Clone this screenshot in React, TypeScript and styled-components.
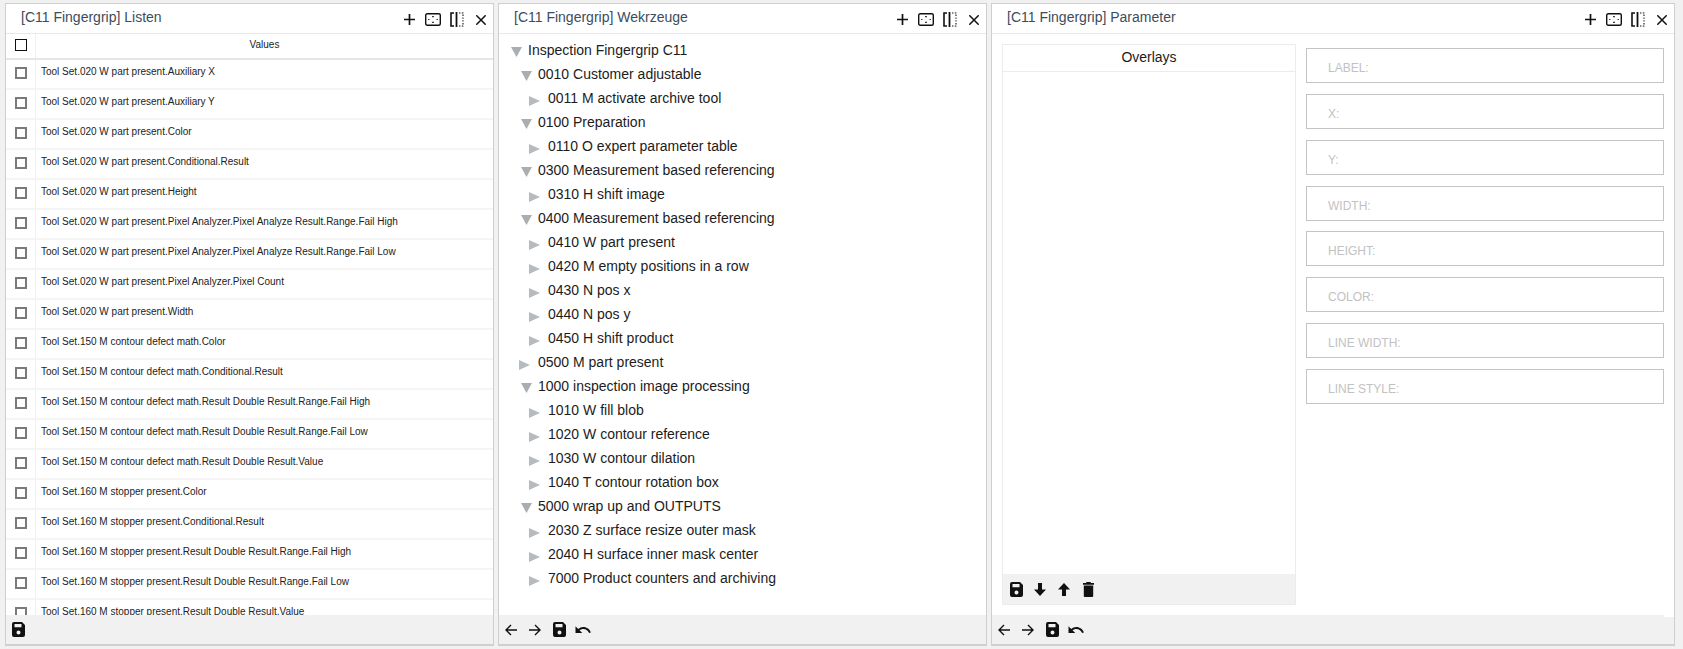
import React from "react";
import styled, { createGlobalStyle } from "styled-components";
import { MdUndo } from "react-icons/md";

const Global = createGlobalStyle`
  html, body { margin: 0; padding: 0; height: 100%; background: #f1f1f1; overflow: hidden; }
  body { font-family: "Liberation Sans", Arial, sans-serif; }
  #root { height: 100%; }
  * { box-sizing: border-box; }
`;

const Page = styled.div`
  display: grid;
  grid-template-columns: 489px 489px 684px;
  gap: 4px;
  height: 649px;
  width: 1683px;
  padding: 3px 0 3px 5px;
`;

const Panel = styled.section`
  display: flex;
  flex-direction: column;
  min-width: 0;
  background: #fff;
  border: 1px solid #cfcfcf;
  border-bottom-width: 2px;
  overflow: hidden;
`;

const Header = styled.header`
  flex: 0 0 30px;
  display: flex;
  align-items: center;
  justify-content: space-between;
  padding: 0 0 0 15px;
  border-bottom: 1px solid #e8e8e8;
`;

const Title = styled.h2`
  margin: -4px 0 0;
  font-size: 14px;
  font-weight: 400;
  color: #3d4c5c;
`;

const HeaderTools = styled.div`
  display: flex;
  align-items: center;
  margin-top: 2px;
`;

const ToolSlot = styled.span`
  width: 24px;
  height: 20px;
  display: flex;
  align-items: center;
  justify-content: center;
  color: #111;
`;

const Footer = styled.footer`
  position: relative;
  flex: 0 0 29px;
  display: flex;
  align-items: center;
  background: #f1f1f1;
  color: #111;
`;

const NotchedFooter = styled(Footer)`
  &::after {
    content: "";
    position: absolute;
    top: 0;
    right: 0;
    width: 10px;
    height: 2px;
    background: #fff;
  }
`;

const FootIcon = styled.span`
  width: 24px;
  height: 20px;
  display: flex;
  align-items: center;
  justify-content: center;
`;

const ListBody = styled.div`
  flex: 1;
  min-height: 0;
  overflow: hidden;
`;

const TableHead = styled.div`
  display: grid;
  grid-template-columns: 30px 1fr;
  height: 26px;
  border-bottom: 2px solid #e6e6e6;
  font-size: 10px;
  color: #222;
`;

const Row = styled.div`
  display: grid;
  grid-template-columns: 30px 1fr;
  height: 30px;
  border-bottom: 2px solid #f5f5f5;
  font-size: 10px;
  color: #222;
`;

const CheckCell = styled.div`
  display: flex;
  align-items: center;
  justify-content: center;
  border-right: 1px solid #f0f0f0;
  padding-bottom: 2px;
`;

const Check = styled.span<{ $dark?: boolean }>`
  display: block;
  width: 12px;
  height: 12px;
  border: ${(p) => (p.$dark ? "1px solid #111" : "2px solid #7a7a7a")};
  background: #fff;
`;

const HeadLabel = styled.div`
  text-align: center;
  line-height: 22px;
`;

const RowLabel = styled.div`
  padding-left: 5px;
  line-height: 24px;
  white-space: nowrap;
`;

const Tree = styled.div`
  flex: 1;
  min-height: 0;
  padding: 4px 0 0 12px;
  overflow: hidden;
`;

const TreeRow = styled.div<{ $level: number }>`
  height: 24px;
  display: flex;
  align-items: center;
  padding-left: ${(p) => p.$level * 10}px;
  font-size: 14px;
  color: #1c1c1c;
  white-space: nowrap;
`;

const Arrow = styled.span<{ $open: boolean }>`
  flex: 0 0 17px;
  display: block;
  height: 10px;
  color: ${(p) => (p.$open ? "#a9aeb2" : "#b6bbbf")};
  margin-left: ${(p) => (p.$open ? "0" : "-2px")};
  margin-right: ${(p) => (p.$open ? "0" : "2px")};
  margin-top: ${(p) => (p.$open ? "-3px" : "0")};
`;

const ParamBody = styled.div`
  flex: 1;
  min-height: 0;
  display: flex;
  gap: 10px;
  padding: 10px 10px 10px 10px;
`;

const Overlays = styled.div`
  flex: 0 0 294px;
  display: flex;
  flex-direction: column;
  border: 1px solid #ececec;
`;

const OverlaysTitle = styled.div`
  height: 27px;
  line-height: 24px;
  text-align: center;
  font-size: 14px;
  color: #1c1c1c;
  border-bottom: 1px solid #ececec;
`;

const OverlaysList = styled.div`
  flex: 1;
`;

const OverlaysFooter = styled.div`
  flex: 0 0 30px;
  display: flex;
  align-items: center;
  padding-left: 1px;
  background: #f1f1f1;
  color: #111;
`;

const Form = styled.div`
  flex: 1;
  display: flex;
  flex-direction: column;
  gap: 10.85px;
  padding-top: 4px;
`;

const Field = styled.div`
  height: 35px;
  display: flex;
  align-items: center;
  padding: 5px 0 0 21px;
  border: 1px solid #c4c4c4;
  font-size: 12px;
  color: #c2c2c2;
  text-transform: uppercase;
`;

const TriangleDown = () => (
  <svg width="11" height="10" viewBox="0 0 11 10"><path d="M0 0h11L5.5 10z" fill="currentColor" /></svg>
);
const TriangleRight = () => (
  <svg width="11" height="10" viewBox="0 0 11 10"><path d="M0 0l11 5-11 5z" fill="currentColor" /></svg>
);

const PlusIcon = () => (
  <svg width="11" height="11" viewBox="0 0 11 11"><path d="M5.5 0v11M0 5.5h11" stroke="currentColor" strokeWidth="1.7" /></svg>
);
const MaxIcon = () => (
  <svg width="16" height="13" viewBox="0 0 16 13" fill="none">
    <rect x=".7" y=".7" width="14.6" height="11.6" rx="1.5" stroke="currentColor" strokeWidth="1.4" />
    <path d="M7.2 3h1.6v1.2H7.2zM7.2 8.8h1.6V10H7.2zM3.2 5.9h1.2v1.2H3.2zM11.6 5.9h1.2v1.2h-1.2z" fill="currentColor" />
  </svg>
);
const SplitIcon = () => (
  <svg width="14" height="15" viewBox="0 0 14 15" fill="none">
    <path d="M4 1H1v13h3" stroke="currentColor" strokeWidth="1.6" />
    <path d="M6.5 0v15" stroke="currentColor" strokeWidth="1.8" />
    <path d="M9 1h4v13H9" stroke="currentColor" strokeWidth="1.1" strokeDasharray="1.4 1.4" />
  </svg>
);
const CloseIcon = () => (
  <svg width="10" height="10" viewBox="0 0 10 10"><path d="M.3.3l9.4 9.4M9.7.3L.3 9.7" stroke="currentColor" strokeWidth="1.5" /></svg>
);
const BackIcon = () => (
  <svg width="12" height="12" viewBox="0 0 12 12" fill="none"><path d="M6 1L1 6l5 5M1 6h11" stroke="currentColor" strokeWidth="1.4" /></svg>
);
const ForwardIcon = () => (
  <svg width="12" height="12" viewBox="0 0 12 12" fill="none"><path d="M6 1l5 5-5 5M11 6H0" stroke="currentColor" strokeWidth="1.4" /></svg>
);
const SaveIcon = () => (
  <svg width="13" height="15" viewBox="0 0 13 15">
    <path fillRule="evenodd" fill="currentColor" d="M2 0h8l3 3v10a2 2 0 0 1-2 2H2a2 2 0 0 1-2-2V2a2 2 0 0 1 2-2zM2.5 2v3.2h7V2zM6.5 8.6a2 2 0 1 0 0 4 2 2 0 0 0 0-4z" />
  </svg>
);
const DownIcon = () => (
  <svg width="12" height="13" viewBox="0 0 12 13"><path fill="currentColor" d="M4 0h4v6.5h4L6 13 0 6.5h4z" /></svg>
);
const UpIcon = () => (
  <svg width="12" height="13" viewBox="0 0 12 13"><path fill="currentColor" d="M6 0l6 6.5H8V13H4V6.5H0z" /></svg>
);
const TrashIcon = () => (
  <svg width="11" height="15" viewBox="0 0 11 15"><path fill="currentColor" d="M3.5 0h4l.5 1h3v1.8H0V1h3zM.8 3.6h9.4V14a1 1 0 0 1-1 1H1.8a1 1 0 0 1-1-1z" /></svg>
);

const listItems = [
  "Tool Set.020 W part present.Auxiliary X",
  "Tool Set.020 W part present.Auxiliary Y",
  "Tool Set.020 W part present.Color",
  "Tool Set.020 W part present.Conditional.Result",
  "Tool Set.020 W part present.Height",
  "Tool Set.020 W part present.Pixel Analyzer.Pixel Analyze Result.Range.Fail High",
  "Tool Set.020 W part present.Pixel Analyzer.Pixel Analyze Result.Range.Fail Low",
  "Tool Set.020 W part present.Pixel Analyzer.Pixel Count",
  "Tool Set.020 W part present.Width",
  "Tool Set.150 M contour defect math.Color",
  "Tool Set.150 M contour defect math.Conditional.Result",
  "Tool Set.150 M contour defect math.Result Double Result.Range.Fail High",
  "Tool Set.150 M contour defect math.Result Double Result.Range.Fail Low",
  "Tool Set.150 M contour defect math.Result Double Result.Value",
  "Tool Set.160 M stopper present.Color",
  "Tool Set.160 M stopper present.Conditional.Result",
  "Tool Set.160 M stopper present.Result Double Result.Range.Fail High",
  "Tool Set.160 M stopper present.Result Double Result.Range.Fail Low",
  "Tool Set.160 M stopper present.Result Double Result.Value",
];

const treeItems: { label: string; level: number; open: boolean }[] = [
  { label: "Inspection Fingergrip C11", level: 0, open: true },
  { label: "0010 Customer adjustable", level: 1, open: true },
  { label: "0011 M activate archive tool", level: 2, open: false },
  { label: "0100 Preparation", level: 1, open: true },
  { label: "0110 O expert parameter table", level: 2, open: false },
  { label: "0300 Measurement based referencing", level: 1, open: true },
  { label: "0310 H shift image", level: 2, open: false },
  { label: "0400 Measurement based referencing", level: 1, open: true },
  { label: "0410 W part present", level: 2, open: false },
  { label: "0420 M empty positions in a row", level: 2, open: false },
  { label: "0430 N pos x", level: 2, open: false },
  { label: "0440 N pos y", level: 2, open: false },
  { label: "0450 H shift product", level: 2, open: false },
  { label: "0500 M part present", level: 1, open: false },
  { label: "1000 inspection image processing", level: 1, open: true },
  { label: "1010 W fill blob", level: 2, open: false },
  { label: "1020 W contour reference", level: 2, open: false },
  { label: "1030 W contour dilation", level: 2, open: false },
  { label: "1040 T contour rotation box", level: 2, open: false },
  { label: "5000 wrap up and OUTPUTS", level: 1, open: true },
  { label: "2030 Z surface resize outer mask", level: 2, open: false },
  { label: "2040 H surface inner mask center", level: 2, open: false },
  { label: "7000 Product counters and archiving", level: 2, open: false },
];

const fields = ["Label:", "X:", "Y:", "Width:", "Height:", "Color:", "Line width:", "Line style:"];

const PanelHeader = ({ title }: { title: string }) => (
  <Header>
    <Title>{title}</Title>
    <HeaderTools>
      <ToolSlot><PlusIcon /></ToolSlot>
      <ToolSlot><MaxIcon /></ToolSlot>
      <ToolSlot><SplitIcon /></ToolSlot>
      <ToolSlot><CloseIcon /></ToolSlot>
    </HeaderTools>
  </Header>
);

const HistoryIcons = () => (
  <>
    <FootIcon><BackIcon /></FootIcon>
    <FootIcon><ForwardIcon /></FootIcon>
    <FootIcon><SaveIcon /></FootIcon>
    <FootIcon><MdUndo size={18} /></FootIcon>
  </>
);

export default function App() {
  return (
    <>
      <Global />
      <Page>
        <Panel>
          <PanelHeader title="[C11 Fingergrip] Listen" />
          <ListBody>
            <TableHead>
              <CheckCell><Check $dark /></CheckCell>
              <HeadLabel>Values</HeadLabel>
            </TableHead>
            {listItems.map((item) => (
              <Row key={item}>
                <CheckCell><Check /></CheckCell>
                <RowLabel>{item}</RowLabel>
              </Row>
            ))}
          </ListBody>
          <Footer>
            <FootIcon><SaveIcon /></FootIcon>
          </Footer>
        </Panel>

        <Panel>
          <PanelHeader title="[C11 Fingergrip] Wekrzeuge" />
          <Tree>
            {treeItems.map((t) => (
              <TreeRow key={t.label} $level={t.level}>
                <Arrow $open={t.open}>{t.open ? <TriangleDown /> : <TriangleRight />}</Arrow>
                {t.label}
              </TreeRow>
            ))}
          </Tree>
          <Footer><HistoryIcons /></Footer>
        </Panel>

        <Panel>
          <PanelHeader title="[C11 Fingergrip] Parameter" />
          <ParamBody>
            <Overlays>
              <OverlaysTitle>Overlays</OverlaysTitle>
              <OverlaysList />
              <OverlaysFooter>
                <FootIcon><SaveIcon /></FootIcon>
                <FootIcon><DownIcon /></FootIcon>
                <FootIcon><UpIcon /></FootIcon>
                <FootIcon><TrashIcon /></FootIcon>
              </OverlaysFooter>
            </Overlays>
            <Form>
              {fields.map((f) => (
                <Field key={f}>{f}</Field>
              ))}
            </Form>
          </ParamBody>
          <NotchedFooter><HistoryIcons /></NotchedFooter>
        </Panel>
      </Page>
    </>
  );
}
